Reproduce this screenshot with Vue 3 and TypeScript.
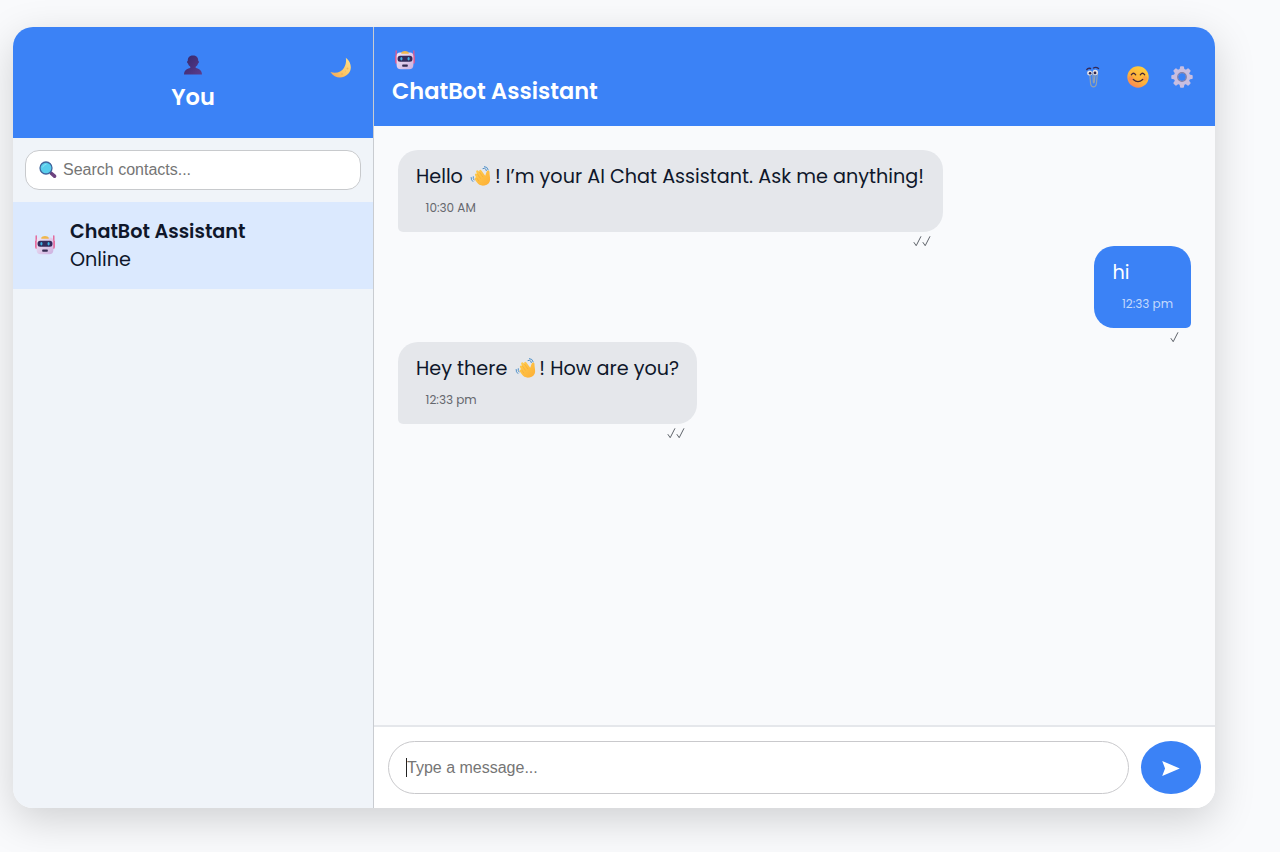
<script setup lang="ts">
import { ref } from 'vue'

interface Message {
  id: number
  mine: boolean
  before: string
  after: string
  time: string
  ticks: number
  kind: string
}

const contactName = 'ChatBot Assistant'
const search = ref('')
const draft = ref('')
const messages: Message[] = [
  { id: 1, mine: false, before: 'Hello', after: '! I’m your AI Chat Assistant. Ask me anything!', time: '10:30 AM', ticks: 2, kind: 'greeting' },
  { id: 2, mine: true, before: 'hi', after: '', time: '12:33 pm', ticks: 1, kind: 'short' },
  { id: 3, mine: false, before: 'Hey there', after: '! How are you?', time: '12:33 pm', ticks: 2, kind: 'reply' },
]
const teeth = [0, 45, 90, 135, 180, 225, 270, 315]
</script>

<template>
  <svg class="defs" aria-hidden="true">
    <defs>
      <linearGradient id="gPerson" x1="0" y1="0" x2="1" y2="1">
        <stop offset="0" stop-color="#33286b" /><stop offset="1" stop-color="#5d3c8c" />
      </linearGradient>
      <linearGradient id="gMoon" x1="1" y1="0" x2="0" y2="1">
        <stop offset="0" stop-color="#ffe28c" /><stop offset=".6" stop-color="#fbc463" /><stop offset="1" stop-color="#f3a45c" />
      </linearGradient>
      <linearGradient id="gFace" x1=".8" y1="0" x2=".2" y2="1">
        <stop offset="0" stop-color="#ffd03e" /><stop offset=".6" stop-color="#fdb13a" /><stop offset="1" stop-color="#f8805a" />
      </linearGradient>
      <linearGradient id="gBot" x1="0" y1="0" x2="1" y2="1">
        <stop offset="0" stop-color="#f1e6f6" /><stop offset="1" stop-color="#cdb0df" />
      </linearGradient>
      <linearGradient id="gHand" x1="0" y1="0" x2="1" y2="1">
        <stop offset="0" stop-color="#ffcd4d" /><stop offset="1" stop-color="#fdae35" />
      </linearGradient>
    </defs>
    <symbol id="person" viewBox="0 0 20 20">
      <path d="M10 .5C6.800.5 4.800 2.500 4.800 5.200v.5c-1 .1-1 2.400.2 2.800.4 1.500 1.200 2.500 2.300 3.200v1.400C3.800 13.700 1.200 15.500 1 19.500h18c-.2-4-2.800-5.800-6.300-6.400v-1.400c1.100-.7 1.900-1.700 2.300-3.200 1.200-.4 1.200-2.700.2-2.800v-.5C15.200 2.500 13.200.5 10 .5Z" fill="url(#gPerson)" />
    </symbol>
    <symbol id="moon" viewBox="0 0 22 22">
      <path d="M15.800.8c5.500 4.200 6.700 11.300 2.500 16-4.700 5.200-13.300 5.400-17.900-1.700 6 1.900 11-.1 13.500-4.200 2.100-3.400 2.500-6.800 1.900-10.100Z" fill="url(#gMoon)" />
      <g fill="#f0b45a"><circle cx="17.500" cy="11.500" r=".9" /><circle cx="12" cy="17" r="1" /><circle cx="15.500" cy="14" r=".5" /></g>
    </symbol>
    <symbol id="robot" viewBox="0 0 20 20">
      <path d="M1.200.8v12.500M18.800.8v12.500" stroke="#e4578f" stroke-width="1.300" stroke-linecap="round" />
      <rect x=".3" y="5.500" width="2.500" height="7.500" rx="1" fill="#e8588e" /><rect x="17.200" y="5.500" width="2.500" height="7.500" rx="1" fill="#e8588e" />
      <path d="M5 2.600h10c2.500 0 3.400 1.500 3.400 4v8.200c0 3-1.500 4.500-4.200 4.500H5.800c-2.700 0-4.200-1.500-4.200-4.500V6.600c0-2.500.9-4 3.400-4Z" fill="url(#gBot)" />
      <path d="M6.300 3.800V2.600Q7 .9 10 .9t3.700 1.700v1.200Z" fill="#efb74d" />
      <rect x="2.600" y="5.700" width="14.800" height="6.100" rx="2.500" fill="#332b5c" />
      <ellipse cx="6.400" cy="8.800" rx="1.100" ry="1.700" fill="#3db4e7" /><ellipse cx="13.600" cy="8.800" rx="1.100" ry="1.700" fill="#3db4e7" />
      <rect x="7.200" y="14.400" width="5.600" height="2.300" rx=".7" fill="#342b52" />
    </symbol>
    <symbol id="clip" viewBox="0 0 14 22">
      <path d="m3.900 9.500.7 8.300q.6 3 2.900 3t2.900-3l.9-10Q11.300 5.500 9 5.500 6.700 5.700 6.900 8l.4 8.300q.4 1.200 1 0l.6-7" fill="none" stroke="#93a1b0" stroke-width="1.200" stroke-linecap="round" />
      <circle cx="3.600" cy="7" r="2.500" fill="#e3e1e6" /><circle cx="9.300" cy="6.500" r="2.700" fill="#e3e1e6" />
      <circle cx="4.100" cy="7.200" r="1.300" fill="#30264f" /><circle cx="9" cy="6.900" r="1.400" fill="#30264f" />
      <path d="M.8 3.600Q2 1.800 4.500 2.500M7.500 2Q10 .5 12.500 2.500" fill="none" stroke="#342956" stroke-width="1.400" stroke-linecap="round" />
    </symbol>
    <symbol id="smile" viewBox="0 0 22 22">
      <circle cx="11" cy="11" r="10.700" fill="url(#gFace)" />
      <circle cx="4" cy="12.500" r="2.400" fill="#f76862" opacity=".3" /><circle cx="18" cy="12.500" r="2.400" fill="#f76862" opacity=".3" />
      <path d="M4.300 8.800q2.200-3.100 4.400 0M13.300 8.800q2.200-3.100 4.400 0M6.300 13.500q4.700 4.200 9.400 0" fill="none" stroke="#4b2b36" stroke-width="1.300" stroke-linecap="round" />
    </symbol>
    <symbol id="gear" viewBox="0 0 22 22">
      <path v-for="a in teeth" :key="a" d="M8.300 5.500 9 1.100q.1-.8.900-.8h2.200q.8 0 .9.800l.7 4.400Z" fill="#c9bee0" :transform="`rotate(${a} 11 11)`" />
      <circle cx="11" cy="11" r="6.100" fill="none" stroke="#c9bee0" stroke-width="4.200" />
      <circle cx="11" cy="11" r="4.300" fill="none" stroke="#8480a6" stroke-width="1.200" />
    </symbol>
    <symbol id="lens" viewBox="0 0 18 18">
      <path d="m12.500 12.500 3 2.700" stroke="#6e4480" stroke-width="3.600" stroke-linecap="round" />
      <path d="m11 11 2 2" stroke="#65407b" stroke-width="1.800" />
      <circle cx="7" cy="7" r="6" fill="#58cdec" stroke="#40649c" stroke-width="1.300" />
      <path d="M3.700 6Q4.500 3.500 7 3.300" fill="none" stroke="#8be3f5" stroke-width="1" stroke-linecap="round" />
    </symbol>
    <symbol id="wave" viewBox="0 0 22 22">
      <path d="M14.500 20.500c-3.500.6-6.100-.9-7.900-3.500l-1.800-2.600c-.8-1.500.6-2.500 1.700-1.500l-1.400-2.500c-.8-1.700 1-2.700 2-1.300L6.300 7.200C5.600 5.500 7.500 4.500 8.500 5.900l.9 1.200c-.9-2 1.100-3.100 2.200-1.400l3.600 5 1.500-4.100c.7-1.800 2.900-1.300 2.800.5-.1 2.800.7 4.900.6 7.700-.1 3-2.200 5.100-5.600 5.700Z" fill="url(#gHand)" />
      <path d="m7.400 9 2.900 4.200M9.500 7.100l3.300 4.700M6.700 13l2.100 2.900" fill="none" stroke="#eea034" stroke-width=".5" stroke-linecap="round" />
      <path d="M13 3.500q1.700-.7 2.700.6.500.7.600 1.500M14.400 1.600q3.100 0 3.800 3.200M1.100 12.500q-.2 2.600 1.700 4M3.200 11.700q-.4 2 .8 3.300" fill="none" stroke="#4c8fc9" stroke-width="1" stroke-linecap="round" />
    </symbol>
  </svg>

  <main class="app">
    <aside class="sidebar">
      <header class="profile">
        <span class="side-slot"></span>
        <div class="me">
          <svg class="i20"><use href="#person" /></svg>
          <h2>You</h2>
        </div>
        <button class="side-slot theme" aria-label="Theme"><svg class="i22"><use href="#moon" /></svg></button>
      </header>
      <label class="search">
        <svg class="lens"><use href="#lens" /></svg>
        <input v-model="search" placeholder="Search contacts..." />
      </label>
      <div class="contact">
        <svg class="i20"><use href="#robot" /></svg>
        <div>
          <div class="name">{{ contactName }}</div>
          <div class="status">Online</div>
        </div>
      </div>
    </aside>

    <section class="chat">
      <header class="chat-head">
        <div class="peer">
          <svg class="i20"><use href="#robot" /></svg>
          <h2>{{ contactName }}</h2>
        </div>
        <div class="tools">
          <button aria-label="Attach"><svg class="clip"><use href="#clip" /></svg></button>
          <button aria-label="Emoji"><svg class="i22"><use href="#smile" /></svg></button>
          <button aria-label="Settings"><svg class="i22"><use href="#gear" /></svg></button>
        </div>
      </header>

      <div class="messages">
        <div v-for="m in messages" :key="m.id" class="bubble" :class="[m.kind, { mine: m.mine }]">
          <div class="line">
            <span>{{ m.before }}</span>
            <svg v-if="m.after" class="wave"><use href="#wave" /></svg>
            <span v-if="m.after">{{ m.after }}</span>
          </div>
          <div class="time">{{ m.time }}</div>
          <div class="ticks">
            <svg v-for="n in m.ticks" :key="n" viewBox="0 0 9 12"><path d="m.8 7.200 2.400 3.500L8 1.300" /></svg>
          </div>
        </div>
      </div>

      <footer class="composer">
        <div class="field">
          <span class="caret"></span>
          <input v-model="draft" placeholder="Type a message..." />
        </div>
        <button class="send" aria-label="Send">
          <svg viewBox="0 0 20 18"><path d="M.7 1 19.300 9 .7 17 3.700 9Z" /></svg>
        </button>
      </footer>
    </section>
  </main>
</template>

<style>
html, body { height: 100%; }
body { margin: 0; overflow: hidden; background: #f9fafc; }
</style>

<style scoped>
* { box-sizing: border-box; }
.defs { position: absolute; width: 0; height: 0; }
.app {
  display: flex;
  width: 1202.400px;
  height: 781.400px;
  margin: 27px 0 0 13px;
  border-radius: 20px;
  overflow: hidden;
  box-shadow: 0 12px 40px rgba(0, 0, 0, .17);
  font-family: Poppins, Inter, "Open Sans", sans-serif;
  font-size: 19.200px;
  color: #0f172a;
}
button { display: flex; align-items: center; justify-content: center; padding: 0; border: 0; background: none; }
svg { display: block; flex: none; }
h2 { margin: 0; font-size: 22.500px; font-weight: 600; line-height: 36px; white-space: nowrap; }
.i20 { width: 20px; height: 20px; }
.i22 { width: 22px; height: 22px; }
.sidebar { flex: 0 0 361px; background: #f0f4f9; border-right: 1px solid #c9ccd1; }
.profile { display: flex; justify-content: space-between; height: 111px; padding: 28px 20px 0; background: #3b82f6; color: #fff; }
.me { display: flex; flex-direction: column; align-items: center; }
.me h2 { margin-top: 4px; }
.side-slot { width: 24px; }
.theme { height: 26px; }
.search { display: flex; align-items: center; height: 40px; margin: 12px; padding: 0 12px; border: 1px solid #c8cacd; border-radius: 14px; background: #fff; }
.lens { width: 18px; height: 18px; margin: 0 6.500px 0 .5px; }
input { flex: 1; min-width: 0; padding: 0; border: 0; outline: 0; background: none; font: 16px "Liberation Sans", Arial, sans-serif; color: #111827; }
input::placeholder { color: #757575; opacity: 1; }
.contact { display: flex; align-items: center; gap: 15px; height: 87px; padding: 0 22px 1px; background: #dbe9fe; }
.name, .status { line-height: 29px; white-space: nowrap; }
.name { font-weight: 600; }
.status { line-height: 28px; }
.chat { flex: 1; min-width: 0; display: flex; flex-direction: column; background: #f9fafc; }
.chat-head { display: flex; flex: none; align-items: center; justify-content: space-between; height: 99px; padding: 0 22px 0 18px; background: #3b82f6; color: #fff; }
.peer .i20 { margin: 6px 0 3px 3px; }
.tools { display: flex; align-items: center; gap: 22.500px; }
.clip { width: 14px; height: 22px; margin-right: 4px; }
.messages { flex: 1; display: flex; flex-direction: column; align-items: flex-start; gap: 14px; padding: 24px; }
.bubble { position: relative; height: 82px; padding: 11px 18px; border-radius: 20px 20px 20px 5px; background: #e5e7eb; }
.bubble.mine { align-self: flex-end; border-radius: 20px 20px 5px 20px; background: #3b82f6; color: #fff; }
.greeting { width: 544.500px; }
.short { width: 97px; }
.reply { width: 299px; }
.line { display: flex; align-items: center; height: 30px; white-space: nowrap; }
.wave { width: 22px; height: 22px; margin: 0 2.500px 0 7.500px; }
.time { margin: 7px 0 0 9.600px; font-size: 12px; line-height: 19px; white-space: nowrap; color: #65686e; }
.mine .time { color: #c3d9fc; }
.ticks { position: absolute; right: 12px; bottom: -14.500px; display: flex; }
.ticks svg { width: 9px; height: 12px; }
.ticks path { fill: none; stroke: #5f636a; stroke-width: 1; }
.composer { display: flex; flex: none; gap: 12px; height: 83px; padding: 14px; border-top: 2px solid #e5e7eb; background: #fff; }
.field { flex: 1; display: flex; align-items: center; height: 53px; padding: 0 17px; border: 1px solid #c9c9cc; border-radius: 27px; }
.caret { width: 1px; height: 19px; background: #222; }
.send { width: 60px; height: 53px; border-radius: 50%; background: #3b82f6; }
.send svg { width: 20px; height: 17px; margin-top: 2px; fill: #fff; }
</style>
